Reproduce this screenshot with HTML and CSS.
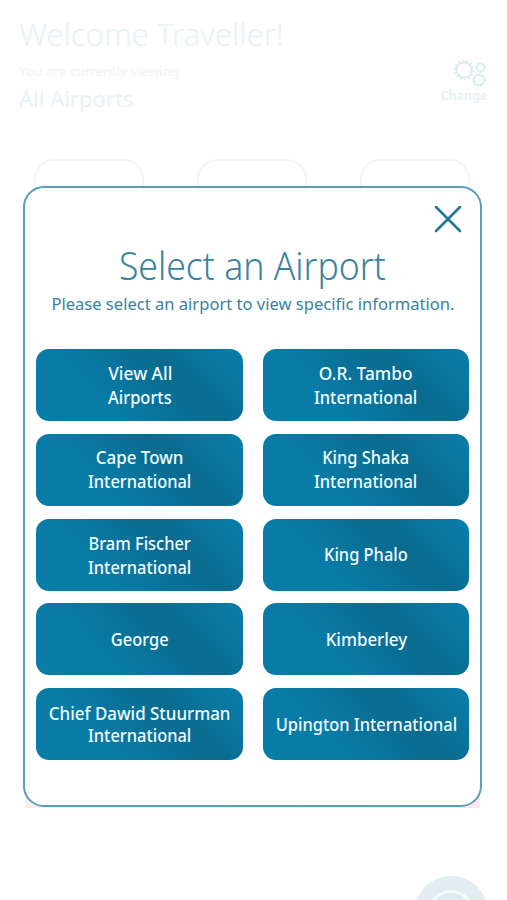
FILE: index.html
```html
<!DOCTYPE html>
<html lang="en">
<head>
<meta charset="utf-8">
<title>Select an Airport</title>
<link rel="stylesheet" href="styles.css">
</head>
<body>
<div class="page">
  <header class="header">
    <div class="greeting">
      <h1><span>Welcome Traveller!</span></h1>
      <p class="viewing"><span>You are currently viewing</span></p>
      <p class="current"><span>All Airports</span></p>
    </div>
    <div class="change">
      <svg width="36" height="32" viewBox="0 0 36 32" fill="none" stroke="currentColor">
        <circle cx="13" cy="14" r="7.6" stroke-width="2"/>
        <circle cx="13" cy="14" r="9.2" stroke-width="1.8" stroke-dasharray="2 2.13"/>
        <circle cx="29.5" cy="11.5" r="3.8" stroke-width="1.5"/>
        <circle cx="29.5" cy="11.5" r="4.9" stroke-width="1" stroke-dasharray="1.5 1.6"/>
        <circle cx="28" cy="24" r="5" stroke-width="1.8"/>
        <circle cx="28" cy="24" r="6.2" stroke-width="1" stroke-dasharray="1.6 1.65"/>
      </svg>
      <span>Change</span>
    </div>
  </header>
  <div class="tiles"><i></i><i></i><i></i></div>
  <div class="panel"></div>
  <svg class="fab" width="74" height="74" viewBox="0 0 74 74">
    <circle cx="37" cy="37" r="37" fill="#e2edf0"/>
    <circle cx="37" cy="37" r="21.5" fill="#dfebef" stroke="#f4f9fa" stroke-width="3"/>
  </svg>
</div>
<section class="modal" role="dialog">
  <div class="bar">
    <svg width="28" height="28" viewBox="0 0 28 28" fill="none" stroke="#20779c" stroke-width="2.5" stroke-linecap="round"><path d="M2 2L26 26M26 2L2 26"/></svg>
  </div>
  <h2><span>Select an Airport</span></h2>
  <p class="hint"><span>Please select an airport to view specific information.</span></p>
  <div class="grid">
    <button><span><b class="wide">View All</b><br>Airports</span></button>
    <button><span><b class="wide">O.R. Tambo</b><br>International</span></button>
    <button class="raised"><span><b>Cape Town</b><br>International</span></button>
    <button class="raised"><span>King Shaka<br>International</span></button>
    <button><span>Bram Fischer<br>International</span></button>
    <button class="raised"><span>King Phalo</span></button>
    <button><span>George</span></button>
    <button><span><b>Kimberley</b></span></button>
    <button class="tight"><span><b>Chief Dawid Stuurman</b><br>International</span></button>
    <button><span>Upington International</span></button>
  </div>
</section>
</body>
</html>
```
FILE: styles.css
```css
* { box-sizing: border-box; margin: 0; padding: 0; }
body { width: 507px; height: 900px; overflow: hidden; position: relative; background: #fefefe; font-family: "Noto Sans", "Open Sans", sans-serif; }
.page { height: 900px; overflow: hidden; color: #ebf2f5; }
.header { display: flex; justify-content: space-between; height: 159px; padding: 12px 20px 0 19px; }
h1, h2, p { white-space: nowrap; }
h1 span, h2 span, p span { display: inline-block; transform-origin: left; }
h1 { font-size: 32px; font-weight: 300; line-height: 44px; }
h1 span { transform: scaleX(.972); }
.viewing { font-size: 13px; font-weight: 500; line-height: 18px; margin-top: 6px; color: #f1f5f7; }
.viewing span { transform: scaleX(1.02); }
.current { font-size: 22px; line-height: 30px; margin-top: 3px; }
.change { width: 46px; padding-top: 44px; display: flex; flex-direction: column; align-items: center; font-size: 12.5px; font-weight: 700; line-height: 18px; color: #ebf2f5; }
.change svg { flex: none; margin-left: 10px; color: #dcebef; }
.change span { margin-top: -1px; }
.tiles { display: flex; justify-content: space-between; padding: 0 37px 0 34px; }
.tiles i { width: 110px; height: 50px; border: 2px solid #f2f5f7; border-bottom: 0; border-radius: 20px 20px 0 0; }
.panel { height: 599px; margin: 0 27px 0 25px; background: linear-gradient(90deg, #f9eeef, #fde8ec); }
.fab { display: block; margin: 68px 0 0 414px; }
.modal { position: absolute; left: 23px; top: 186px; width: 459px; height: 621px; border: 2px solid #5b9fb7; border-radius: 21px; background: #fefefe; padding: 17px 11px 0; color: #3b829f; }
.bar { display: flex; justify-content: flex-end; padding-right: 7px; height: 28px; }
h2 { font-size: 39px; font-weight: 300; line-height: 54px; text-align: center; margin-top: 5px; }
h2 span { transform: scaleX(.912); transform-origin: center; }
.hint { font-size: 17px; line-height: 24px; text-align: center; }
.hint span { transform: scaleX(.974); transform-origin: center; }
.grid { display: grid; grid-template-columns: 207px 206px; grid-auto-rows: 72px; column-gap: 20px; row-gap: 12.75px; margin-top: 33px; }
button { border: 0; border-radius: 13px; color: #f0fbff; font: 500 18px/24px "Noto Sans", sans-serif; white-space: nowrap; display: flex; align-items: center; justify-content: center; background: linear-gradient(46deg, #087da8 0%, #087ba6 32%, #0a7097 54%, #0a6b8e 66%, #0a7299 78%, #087ba6 94%); }
button span { transform: scaleX(.912); }
button b { display: inline-block; font-weight: 500; transform: scaleX(1.03); }
button b.wide { transform: scaleX(1.055); }
button.raised { padding-bottom: 2px; }
button.tight { line-height: 22px; }
```
